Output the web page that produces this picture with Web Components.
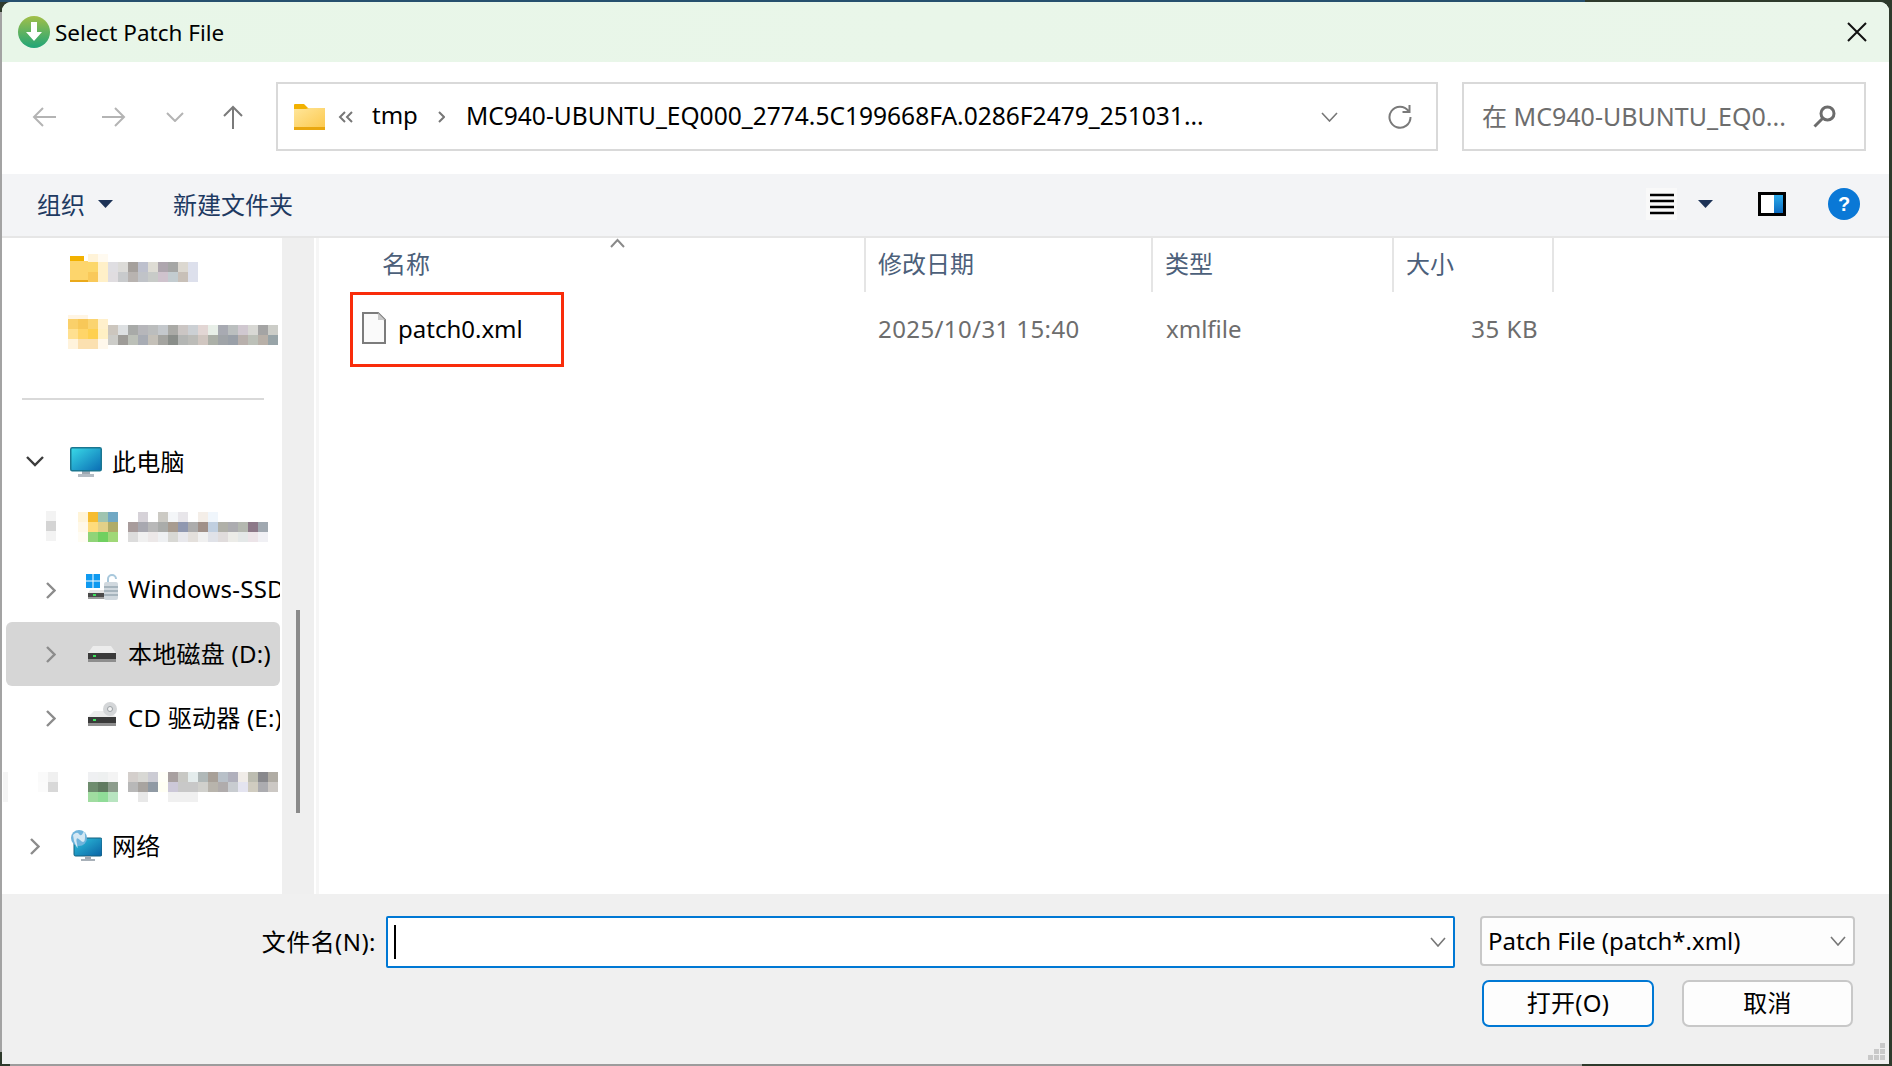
<!DOCTYPE html>
<html lang="zh-CN">
<head>
<meta charset="utf-8">
<title>Select Patch File</title>
<style>
    html, body { margin: 0; height: 100%; }
    body {
        width: 1892px;
        height: 1066px;
        overflow: hidden;
        box-sizing: border-box;
        padding: 2px 3px 2px 2px;
        font: 24px "Noto Sans", "Noto Sans CJK SC", sans-serif;
        color: #000;
        background:
            linear-gradient(#26506e, #26506e) 0 0 / 1585px 2px no-repeat,
            linear-gradient(#a3a3a3, #a3a3a3) 0 12px / 2px 1040px no-repeat,
            linear-gradient(#9c9c9c, #9c9c9c) 10px 1064px / 1572px 2px no-repeat,
            #2e3a2c;
    }
</style>
</head>
<body>
<fd-window>
    <fd-titlebar>Select Patch File</fd-titlebar>
    <fd-addressbar></fd-addressbar>
    <fd-toolbar></fd-toolbar>
    <fd-content>
        <fd-nav>
            <fd-nav-item indent="68" blur>
                <svg slot="icon" width="18" height="28" viewBox="0 0 18 28"><path d="M0 2h14v6H0z" fill="#f2b100"/><path d="M0 7h18v19H0z" fill="#fdd56c"/><path d="M0 26h18v2H0z" fill="#eaa91a"/></svg>
                <fd-mosaic slot="icon" colors="#fff3d8,#fffaf0;#fcd76a,#fff0c8;#f9c95a,#fff0c8" heights="8,10,10"></fd-mosaic>
                <fd-mosaic colors="#dfdee2,#dcdbd8,#a5a09c,#bdc0cd,#dedcd4,#aea6ae,#a5a6a5,#dcd8d0,#dde0ec;#e0dde0,#c8cacc,#b8b3b0,#c0c3c8,#c8cbc8,#cfc3cd,#c3ccd0,#c8c0b8,#dde0ec" style="margin-top:8px"></fd-mosaic>
            </fd-nav-item>
            <fd-nav-item indent="66" blur>
                <fd-mosaic slot="icon" colors="#fff5e4,#fff5e4,#ffffff,#ffffff;#fad06a,#f8c858,#fbd470,#fff0cc;#ffe090,#ffd568,#fed050,#fff0c4;#fff3dc,#fbe0b0,#fbe0b0,#fff8ec" heights="4,10,10,10"></fd-mosaic>
                <fd-mosaic colors="#ccc6be,#dde0e2,#a8aaa8,#b6b6ba,#bbbdbd,#c4c8cc,#aaaaa6,#cbc6c4,#ccd0d4,#e2d6d4,#e8efe8,#a8aab2,#bbbfbf,#d0c8d0,#d8d8d4,#a4a4a4,#cccdc8;#ccccc8,#9e9c98,#bcc0b8,#a8acb4,#c4c0b8,#a4a4a0,#8a8e8a,#b4b6b4,#bcbcb8,#d0c6c0,#acb0a8,#a0a4a8,#9aa0a8,#b8b0ac,#bcc0b8,#b8b0a8,#98a4a8" style="margin-top:6px"></fd-mosaic>
            </fd-nav-item>
            <fd-nav-rule></fd-nav-rule>
            <fd-nav-item indent="24" lead="44" gap="10" expander="down">
                <svg slot="icon" width="32" height="30" viewBox="0 0 32 30"><defs><linearGradient id="scr" x1="0" y1="0" x2="1" y2="1"><stop offset="0" stop-color="#3adbe8"/><stop offset="1" stop-color="#0a6cb4"/></linearGradient></defs><path d="M12 24h8v3h-8z" fill="#9fa9b2"/><path d="M8 27h16v3H8z" fill="#b4bcc4"/><rect x=".75" y=".75" width="30.500" height="23" rx="1.500" fill="url(#scr)" stroke="#1b7690" stroke-width="1.500"/></svg>
                此电脑
            </fd-nav-item>
            <fd-nav-item indent="44" lead="32" gap="10" blur>
                <fd-mosaic slot="lead" colors="#f3f3f3;#d4d4d4;#f3f3f3"></fd-mosaic>
                <fd-mosaic slot="icon" colors="#fff4d8,#f6bc2e,#9fc4b0,#70a8c4;#fff8e8,#fedc7c,#e2d088,#b0ac68;#fffcf4,#90d478,#70d060,#a0d878" style="margin-top:2px"></fd-mosaic>
                <fd-mosaic colors="#ffffff,#d6d2d8,#ffffff,#cccac4,#f4f6f8,#e8e6ea,#ffffff,#f4eee8,#f0f6fc,#ffffff,#ffffff,#ffffff,#ffffff,#ffffff;#a89c9c,#a8a8b0,#b8b8b8,#aaacaa,#a89c90,#9098b0,#acacac,#a09088,#c0cfe0,#b0b0a8,#acacb0,#b4b8b0,#8c7888,#a0a8b0;#dcdcdc,#f0f0f0,#ece8e8,#eef0f2,#d8d8d4,#e8e8ec,#e4e0dc,#f0f0f0,#e0e2e8,#e0dcdc,#ecece8,#e4e8e8,#ece4e8,#f0f0f4" style="margin-top:2px"></fd-mosaic>
            </fd-nav-item>
            <fd-nav-item indent="44" lead="40" gap="10" expander="right">
                <svg slot="icon" style="margin:-6px -2px 0 0" width="34" height="26" viewBox="0 0 34 26"><path d="M0 0h6.500v6.500H0zM7.500 0H14v6.500H7.500zM0 7.500h6.500V14H0zM7.500 7.500H14V14H7.500z" fill="#0f9af0"/><path d="M4 16h26v3H2z" fill="#e4e4e4"/><path d="M2 19h28v4H2z" fill="#4a4a4a"/><path d="M2 23h28v2H2z" fill="#9a9a9a"/><rect x="7" y="20" width="3" height="2" fill="#3be05b"/><path d="M22 8V5a4 4 0 0 1 8 0" fill="none" stroke="#a8c8dc" stroke-width="2"/><rect x="18" y="8" width="14" height="18" rx="2" fill="#d0d8de"/><path d="M18 13h14M18 17h14M18 21h14" stroke="#98a8b2" stroke-width="1.500"/></svg>
                Windows-SSD
            </fd-nav-item>
            <fd-nav-item indent="44" lead="40" gap="10" expander="right" selected>
                <svg slot="icon" width="32" height="16" viewBox="0 0 32 16"><path d="M7 0h18l5 7H2z" fill="#ececec"/><path d="M2 7h28v6H2z" fill="#3a3a3a"/><path d="M2 13h28v3H2z" fill="#8e8e8e"/><rect x="7" y="9" width="3" height="2" fill="#3be05b"/></svg>
                本地磁盘 (D:)
            </fd-nav-item>
            <fd-nav-item indent="44" lead="40" gap="10" expander="right">
                <svg slot="icon" style="margin-top:-8px" width="32" height="24" viewBox="0 0 32 24"><path d="M8 9h16l6 6H2z" fill="#ececec"/><circle cx="24" cy="7" r="7" fill="#d4d6d8"/><circle cx="24" cy="7" r="2.500" fill="#f4f4f4" stroke="#9aa0a4"/><path d="M2 15h28v6H2z" fill="#3a3a3a"/><path d="M2 21h28v3H2z" fill="#8e8e8e"/><rect x="7" y="17" width="3" height="2" fill="#3be05b"/></svg>
                CD 驱动器 (E:)
            </fd-nav-item>
            <fd-nav-item indent="36" lead="50" gap="10" hazy blur>
                <fd-mosaic slot="lead" style="margin-top:10px" colors="#fafafa,#f0f0f0;#fbfbfb,#d8d8d8;#ffffff,#ffffff"></fd-mosaic>
                <fd-mosaic slot="icon" style="margin-top:10px" colors="#eff0f2,#eef0f0,#f4f4f4;#6e8c6e,#607a60,#8c9c8c;#a0dca0,#90dc98,#b8e4c0"></fd-mosaic>
                <fd-mosaic style="margin-top:10px" colors="#d4cfcc,#d8d8d4,#ccccd4,#fffff8,#a8a0a0,#c8c8c4,#e4ecec,#b0b8b8,#a8a098,#b8c0c8,#b0b0bc,#f0ece8,#bcbcb0,#88888c,#b0aca4;#b8b8b8,#a8a4a0,#909aa4,#fffff4,#ccc8d8,#c8c8c8,#c8c8c8,#d0d0cc,#b8b4ac,#b0acac,#c8ccd0,#e4e4f0,#d0ccc0,#acacb0,#ccc8c4;#ffffff,#e8e8e8,#ffffff,#ffffff,#f0f0f0,#f0f0f0,#f0f0f0,#ffffff,#ffffff,#ffffff,#ffffff,#ffffff,#ffffff,#ffffff,#ffffff"></fd-mosaic>
            </fd-nav-item>
            <fd-nav-item indent="28" lead="40" gap="10" expander="right">
                <svg slot="icon" width="32" height="32" viewBox="0 0 32 32"><defs><linearGradient id="net" x1="0" y1="0" x2="1" y2="1"><stop offset="0" stop-color="#2fc4de"/><stop offset="1" stop-color="#0a62a4"/></linearGradient></defs><rect x="4" y="8" width="28" height="18" rx="1.500" fill="url(#net)" stroke="#17607e"/><path d="M15 26h6v3h-6z" fill="#9fa9b2"/><path d="M11 29h14v2H11z" fill="#a8b0b8"/><circle cx="9" cy="8" r="8" fill="#6fb4dc"/><path d="M3 5q4-4 6-1t4-1 2 4-5 3-3 4-3-3z" fill="#d4e8f4"/></svg>
                网络
            </fd-nav-item>
        </fd-nav>
        <fd-nav-track></fd-nav-track>
        <fd-file-list></fd-file-list>
    </fd-content>
    <fd-footer></fd-footer>
</fd-window>

<script>
class FdElement extends HTMLElement {
    constructor() {
        super();
        this.attachShadow({ mode: "open" });
        this.shadowRoot.innerHTML = this.render();
    }

    render() {
        return "";
    }
}

const caret = `<svg width="15" height="8" viewBox="0 0 15 8"><path d="M0 0h15L7.500 8z" fill="#1d3357"/></svg>`;
const chevron = (w, h, color, sw) =>
    `<svg width="${w}" height="${h}" viewBox="0 0 ${w} ${h}"><path d="M1 1L${w / 2} ${h - 1}L${w - 1} 1" fill="none" stroke="${color}" stroke-width="${sw}"/></svg>`;

class FdWindow extends FdElement {
    render() {
        return `<style>
            :host { display: grid; grid-template-rows: 60px 112px 64px 656px 170px; height: 1062px; border-radius: 9px 9px 0 0; overflow: hidden; background: #fff; }
        </style><slot></slot>`;
    }
}

class FdTitlebar extends FdElement {
    render() {
        return `<style>
            :host { display: flex; align-items: center; padding: 0 22px 0 16px; background: linear-gradient(90deg, #e8f6e8, #eaf6ea); }
            svg.app { margin-right: 5px; }
            span { flex: 1; font-size: 22.500px; }
        </style>
        <svg class="app" width="32" height="32" viewBox="0 0 32 32">
            <defs><linearGradient id="g" x1="0" y1="0" x2="0" y2="1"><stop offset="0" stop-color="#a2bf48"/><stop offset="1" stop-color="#1fa578"/></linearGradient></defs>
            <circle cx="16" cy="16" r="16" fill="url(#g)"/>
            <path d="M13 6h6v10h5l-8 9-8-9h5z" fill="#fff"/>
        </svg>
        <span><slot></slot></span>
        <svg width="20" height="20" viewBox="0 0 20 20"><path d="M1 1l18 18M19 1L1 19" stroke="#111" stroke-width="2"/></svg>`;
    }
}

class FdAddressbar extends FdElement {
    render() {
        return `<style>
            :host { display: flex; align-items: flex-start; padding: 20px 0 0 30px; background: #fff; }
            .nav { height: 69px; display: flex; align-items: center; }
            .box { box-sizing: border-box; height: 69px; border: 2px solid #d9d9d9; display: flex; align-items: center; }
            .path { width: 1162px; margin-left: 32px; padding-left: 16px; }
            .search { width: 404px; margin-left: 24px; padding-left: 18px; color: #6d6d6d; }
            .long { width: 738px; white-space: nowrap; overflow: hidden; font-size: 24.550px; padding-bottom: 3px; }
            .q { width: 304px; white-space: nowrap; overflow: hidden; font-size: 25px; padding-bottom: 4px; }
            .tmp { width: 46px; margin: 0 20px 0 18px; padding-bottom: 4px; }
        </style>
        <div class="nav">
            <svg width="24" height="22" viewBox="0 0 24 22"><path d="M24 11H2M11 2l-9 9 9 9" fill="none" stroke="#b4b4b4" stroke-width="2"/></svg>
            <svg style="margin-left:46px" width="24" height="22" viewBox="0 0 24 22"><path d="M0 11h22M13 2l9 9-9 9" fill="none" stroke="#b4b4b4" stroke-width="2"/></svg>
            <span style="margin-left:40px;display:flex">${chevron(18, 10, "#b4b4b4", 2)}</span>
            <svg style="margin-left:38px" width="22" height="24" viewBox="0 0 22 24"><path d="M11 24V2M2 11l9-9 9 9" fill="none" stroke="#7a7a7a" stroke-width="2"/></svg>
        </div>
        <div class="box path">
            <svg width="31" height="26" viewBox="0 0 31 26"><path d="M0 1a1 1 0 0 1 1-1h9l4 4h17v4H0z" fill="#f2b100"/><defs><linearGradient id="f" x1="0" y1="0" x2="1" y2="1"><stop offset="0" stop-color="#ffe69a"/><stop offset="1" stop-color="#fcc94e"/></linearGradient></defs><path d="M0 5h12l3-1h16v20H0z" fill="url(#f)"/><path d="M0 23h31v3H0z" fill="#e9a70f"/></svg>
            <svg style="margin-left:13px" width="16" height="12" viewBox="0 0 16 12"><path d="M7 1L2 6l5 5M14 1L9 6l5 5" fill="none" stroke="#777" stroke-width="2"/></svg>
            <span class="tmp">tmp</span>
            <svg width="7" height="12" viewBox="0 0 7 12"><path d="M1 1l5 5-5 5" fill="none" stroke="#777" stroke-width="2"/></svg>
            <span class="long" style="margin-left:21px">MC940-UBUNTU_EQ000_2774.5C199668FA.0286F2479_251031...</span>
            <span style="margin-left:117px;display:flex">${chevron(17, 10, "#777", 1.600)}</span>
            <svg style="margin-left:50px" width="24" height="24" viewBox="0 0 24 24"><path d="M20.500 6A10.500 10.500 0 1 0 22.500 12M21.500 0v7h-7" fill="none" stroke="#7a7a7a" stroke-width="2"/></svg>
        </div>
        <div class="box search">
            <span class="q">在 MC940-UBUNTU_EQ0...</span>
            <svg style="margin-left:27px" width="23" height="23" viewBox="0 0 23 23"><circle cx="14.500" cy="8.500" r="6.500" fill="none" stroke="#6c6c6c" stroke-width="3"/><path d="M10 13L1.500 21.500" stroke="#6c6c6c" stroke-width="3"/></svg>
        </div>`;
    }
}

class FdToolbar extends FdElement {
    render() {
        return `<style>
            :host { display: flex; align-items: center; box-sizing: border-box; padding: 0 29px 2px 35px; background: #f3f4f6; border-bottom: 2px solid #e6e6e6; color: #1e3a62; }
            .gap { flex: 1; }
            .txt { padding-bottom: 2px; }
            .view { box-sizing: border-box; width: 31px; height: 32px; display: flex; align-items: center; justify-content: center; background: #f9f9f9; }
            .help { width: 32px; height: 32px; border-radius: 50%; background: #0a78d6; color: #fff; text-align: center; font: bold 20px/32px "Liberation Sans", sans-serif; }
        </style>
        <span class="txt">组织</span>
        <span style="margin-left:13px;display:flex">${caret}</span>
        <span class="txt" style="margin-left:60px">新建文件夹</span>
        <span class="gap"></span>
        <span class="view"><svg width="24" height="22" viewBox="0 0 24 22"><path d="M0 2h24M0 8h24M0 14h24M0 20h24" stroke="#000" stroke-width="2.500"/></svg></span>
        <span style="margin-left:21px;display:flex">${caret}</span>
        <svg style="margin-left:45px" width="28" height="24" viewBox="0 0 28 24"><defs><linearGradient id="p" x1="0" y1="0" x2="0" y2="1"><stop offset="0" stop-color="#2cabea"/><stop offset="1" stop-color="#0c6cc2"/></linearGradient></defs><rect width="28" height="24" fill="#000"/><rect x="3" y="3" width="13" height="18" fill="#fff"/><rect x="16" y="3" width="9" height="18" fill="url(#p)"/></svg>
        <span class="help" style="margin-left:42px">?</span>`;
    }
}

class FdContent extends FdElement {
    render() {
        return `<style>
            :host { display: grid; grid-template-columns: 280px 32px 1fr; overflow: hidden; }
        </style><slot></slot>`;
    }
}

class FdNav extends FdElement {
    render() {
        return `<style>
            :host { display: block; overflow: hidden; background: #fff; }
            div { margin-top: -2px; }
        </style><div><slot></slot></div>`;
    }
}

class FdNavItem extends FdElement {
    render() {
        const indent = Number(this.getAttribute("indent") || 0);
        const expander = this.getAttribute("expander");
        const lead = this.getAttribute("lead");
        let arrow = "";
        if (expander === "right") {
            arrow = `<svg width="10" height="17" viewBox="0 0 10 17"><path d="M1 1l7.500 7.500L1 16" fill="none" stroke="#8c8c8c" stroke-width="2.400"/></svg>`;
        } else if (expander === "down") {
            arrow = `<svg style="margin-top:-2px" width="18" height="11" viewBox="0 0 18 11"><path d="M1 1l8 8 8-8" fill="none" stroke="#3c3c3c" stroke-width="2.400"/></svg>`;
        }
        return `<style>
            :host { display: block; height: 64px; white-space: nowrap; overflow: hidden; }
            :host([hazy]) { background: linear-gradient(#f5f5f5, #f5f5f5) 1px 22px / 5px 30px no-repeat; }
            .row { box-sizing: border-box; height: 64px; margin: 0 2px 0 4px; padding-left: ${indent - 4}px; display: flex; align-items: center; border-radius: 6px; overflow: hidden; }
            :host([selected]) .row { background: #d6d6d6; }
            .lead { display: flex; align-items: center; flex: none; ${lead ? `width: ${lead}px;` : ""} }
            .icon { display: flex; align-items: center; flex: none; margin-right: ${this.getAttribute("gap") || 0}px; }
            .label { flex: none; display: flex; margin-bottom: 4px; letter-spacing: .250px; }
            :host([blur]) .label { margin-bottom: 0; }
        </style>
        <div class="row">
            <span class="lead">${arrow}<slot name="lead"></slot></span>
            <span class="icon"><slot name="icon"></slot></span>
            <span class="label"><slot></slot></span>
        </div>`;
    }
}

class FdNavRule extends FdElement {
    render() {
        return `<style>
            :host { display: block; height: 66px; box-sizing: border-box; padding: 34px 18px 0 20px; }
            div { height: 2px; background: #d9d9d9; }
        </style><div></div>`;
    }
}

class FdMosaic extends FdElement {
    render() {
        const rows = this.getAttribute("colors").split(";").map(r => r.split(","));
        const heights = (this.getAttribute("heights") || "").split(",").filter(Boolean);
        const cols = rows[0].length;
        const tpl = rows.map((_, i) => `${heights[i] || 10}px`).join(" ");
        const cells = rows.flat().map(c => `<i style="background:${c}"></i>`).join("");
        return `<style>
            :host { display: inline-grid; grid-template-columns: repeat(${cols}, 10px); grid-template-rows: ${tpl}; flex: none; }
        </style>${cells}`;
    }
}

class FdNavTrack extends FdElement {
    render() {
        return `<style>
            :host { display: block; background: #efefef; box-sizing: border-box; padding: 372px 0 0 14px; }
            div { width: 4px; height: 203px; background: #8a8a8a; }
        </style><div></div>`;
    }
}

class FdFileList extends FdElement {
    render() {
        return `<style>
            :host { display: block; position: relative; background: #fff; padding-left: 5px; }
            :host::before { content: ""; position: absolute; left: 2px; top: 0; bottom: 0; width: 3px; background: #f6f6f6; }
            .cols { display: grid; grid-template-columns: 547px 287px 241px 160px; }
            .head { height: 54px; color: #4c607a; }
            .head span { box-sizing: border-box; display: flex; align-items: center; padding: 0 0 5px 12px; border-right: 2px solid #e5e5e5; position: relative; }
            .head span:first-child { padding-left: 63px; }
            .sort { position: absolute; left: 291px; top: 0; }
            .row { height: 74px; color: #6d6d6d; }
            .row span { display: flex; align-items: center; padding: 0 0 2px 12px; }
            .row .name { padding-left: 43px; color: #000; gap: 12px; }
            .row .date { letter-spacing: .400px; }
            .row .type { padding-left: 13px; }
            .row .size { justify-content: flex-end; padding: 0 16px 2px 0; letter-spacing: .500px; }
            .mark { position: absolute; left: 36px; top: 54px; width: 214px; height: 75px; box-sizing: border-box; border: 3px solid #f92c0a; }
        </style>
        <div class="cols head">
            <span>名称<svg class="sort" width="15" height="10" viewBox="0 0 15 10"><path d="M1 9l6.500-7L14 9" fill="none" stroke="#8a8a8a" stroke-width="2"/></svg></span>
            <span>修改日期</span>
            <span>类型</span>
            <span>大小</span>
        </div>
        <div class="cols row">
            <span class="name"><svg width="24" height="32" viewBox="0 0 24 32"><path d="M1 1h15l7 7v23H1z" fill="#fafafa" stroke="#7c7c7c" stroke-width="2"/><path d="M16 1v7h7z" fill="#c8c8c8"/></svg>patch0.xml</span>
            <span class="date">2025/10/31 15:40</span>
            <span class="type">xmlfile</span>
            <span class="size">35 KB</span>
        </div>
        <div class="mark"></div>`;
    }
}

class FdFooter extends FdElement {
    render() {
        return `<style>
            :host { display: block; position: relative; box-sizing: border-box; padding: 22px 34px 0 0; background: #f0f0f0; }
            .line { display: flex; justify-content: flex-end; align-items: flex-start; }
            .label { align-self: center; margin-right: 10px; padding-bottom: 3px; letter-spacing: .450px; white-space: nowrap; }
            .input { box-sizing: border-box; width: 1069px; height: 52px; border: 2px solid #0078d4; border-radius: 2px; background: #fff; display: flex; align-items: center; padding-left: 6px; }
            .cursor { width: 2px; height: 34px; background: #000; }
            .input svg { margin-left: auto; margin-right: 7px; }
            .combo { box-sizing: border-box; width: 375px; height: 50px; margin-left: 25px; padding: 0 0 2px 6px; border: 2px solid #c8c8c8; border-radius: 4px; background: #fdfdfd; display: flex; align-items: center; white-space: nowrap; }
            .combo svg { margin-left: auto; margin-right: 7px; margin-top: 2px; }
            .btn { box-sizing: border-box; height: 47px; padding-bottom: 4px; border: 2px solid #c8c8c8; border-radius: 7px; background: #fdfdfd; display: flex; align-items: center; justify-content: center; letter-spacing: .300px; }
            .open { width: 172px; border-color: #0078d4; }
            .cancel { width: 171px; margin: 0 2px 0 28px; }
            .grip { position: absolute; right: 4px; bottom: 4px; }
        </style>
        <div class="line">
            <span class="label">文件名(N):</span>
            <div class="input"><span class="cursor"></span>${chevron(16, 10, "#777", 1.600)}</div>
            <div class="combo">Patch File (patch*.xml)${chevron(16, 10, "#777", 1.600)}</div>
        </div>
        <div class="line" style="margin-top:12px">
            <div class="btn open">打开(O)</div>
            <div class="btn cancel">取消</div>
        </div>
        <svg class="grip" width="17" height="17" viewBox="0 0 17 17"><path d="M12 0h5v5h-5zM6 6h5v5H6zM12 6h5v5h-5zM0 12h5v5H0zM6 12h5v5H6zM12 12h5v5h-5z" fill="#c9c9c9"/></svg>`;
    }
}

customElements.define("fd-window", FdWindow);
customElements.define("fd-titlebar", FdTitlebar);
customElements.define("fd-addressbar", FdAddressbar);
customElements.define("fd-toolbar", FdToolbar);
customElements.define("fd-content", FdContent);
customElements.define("fd-nav", FdNav);
customElements.define("fd-nav-rule", FdNavRule);
customElements.define("fd-mosaic", FdMosaic);
customElements.define("fd-nav-track", FdNavTrack);
customElements.define("fd-file-list", FdFileList);
customElements.define("fd-footer", FdFooter);
customElements.define("fd-nav-item", FdNavItem);
</script>
</body>
</html>
